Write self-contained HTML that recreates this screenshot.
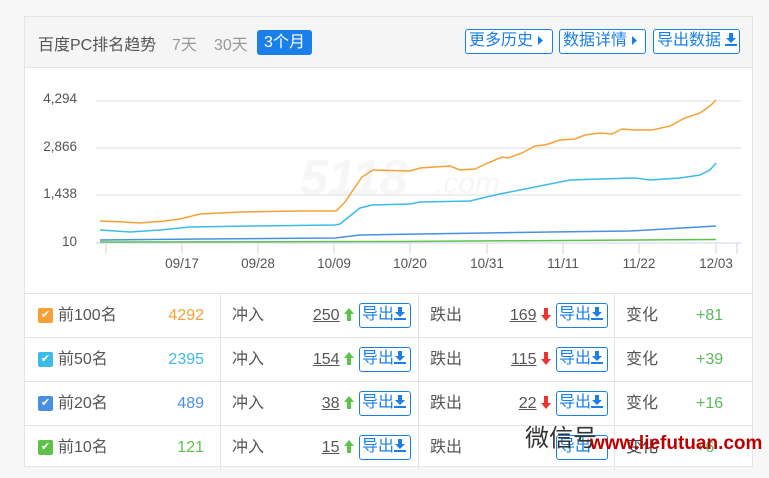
<!DOCTYPE html><html><head><meta charset="utf-8"><style>
*{margin:0;padding:0;box-sizing:border-box}
body{width:769px;height:478px;background:#f7f7f7;font-family:"Liberation Sans","Noto Sans CJK SC",sans-serif;position:relative;overflow:hidden;color:#555}
.card{position:absolute;left:24px;top:16px;width:729px;height:451px;background:#fff;border:1px solid #e4e4e4}
.hd{position:absolute;left:0;top:0;width:727px;height:51px;background:#f5f5f5;border-bottom:1px solid #e4e4e4}
.a{position:absolute;white-space:nowrap}
.btn{position:absolute;border:1px solid #1a7fe8;border-radius:3px;color:#1a7fe8;background:#fff;font-size:16px;line-height:22px;height:25px;padding-left:3px}
.row{position:absolute;left:0;width:727px;height:44px;border-top:1px solid #e4e4e4}
.row .a{top:12px;font-size:16px;line-height:20px}
.cb{position:absolute;left:13px;top:14px;width:15px;height:15px;border-radius:2px;color:#fff;font-size:11px;line-height:15px;text-align:center}
.num{text-decoration:underline;color:#555}
.sb{top:9px!important;height:25px;width:52px;border:1px solid #1a7fe8;border-radius:3px;color:#1a7fe8;font-size:16px!important;line-height:22px!important;padding-left:2px}
.vl{position:absolute;top:0;width:1px;height:44px;background:#e4e4e4}
svg.i{vertical-align:-1px}
</style></head><body>
<div class="card">
<div class="hd">
<div class="a" style="left:13px;top:14px;font-size:16px;color:#555">百度PC排名趋势</div>
<div class="a" style="left:147px;top:14px;font-size:16px;color:#999">7天</div>
<div class="a" style="left:189px;top:14px;font-size:16px;color:#999">30天</div>
<div class="a" style="left:232px;top:13px;width:55px;height:25px;background:#1a7fe8;color:#fff;border-radius:3px;font-size:16px;line-height:25px;text-align:center">3个月</div>
<div class="btn" style="left:440px;top:12px;width:88px">更多历史 <svg class="i" width="7" height="11"><path d="M1 1L6 5.5L1 10Z" fill="#1a7fe8"/></svg></div>
<div class="btn" style="left:534px;top:12px;width:87px">数据详情 <svg class="i" width="7" height="11"><path d="M1 1L6 5.5L1 10Z" fill="#1a7fe8"/></svg></div>
<div class="btn" style="left:628px;top:12px;width:87px">导出数据 <svg class="i" width="12" height="13"><path d="M4 0H8V5H11L6 10L1 5H4Z M0 11H12V13H0Z" fill="#1a7fe8"/></svg></div>
</div>
</div>
<svg class="a" style="left:0;top:0" width="769" height="290" font-family="Liberation Sans,DejaVu Sans,sans-serif">
<text x="300" y="195" font-size="50" font-style="italic" font-weight="bold" fill="#f6f6f6">5118</text><text x="435" y="193" font-size="30" font-style="italic" fill="#f6f6f6">.com</text>
<g stroke="#ddd" stroke-width="1"><line x1="96" y1="101" x2="741" y2="101"/><line x1="96" y1="148" x2="741" y2="148"/><line x1="96" y1="195" x2="741" y2="195"/></g>
<line x1="96" y1="243" x2="741" y2="243" stroke="#ccd6eb"/>
<g stroke="#ccd6eb"><line x1="106" y1="243" x2="106" y2="254"/><line x1="182" y1="243" x2="182" y2="254"/><line x1="258" y1="243" x2="258" y2="254"/><line x1="334" y1="243" x2="334" y2="254"/><line x1="410" y1="243" x2="410" y2="254"/><line x1="487" y1="243" x2="487" y2="254"/><line x1="563" y1="243" x2="563" y2="254"/><line x1="639" y1="243" x2="639" y2="254"/><line x1="716" y1="243" x2="716" y2="254"/><line x1="737" y1="243" x2="737" y2="254"/></g>
<g fill="#555" font-size="13.5" text-anchor="end"><text x="77" y="103">4,294</text><text x="77" y="151">2,866</text><text x="77" y="198">1,438</text><text x="77" y="246">10</text></g>
<g fill="#555" font-size="13.5" text-anchor="middle"><text x="182" y="268">09/17</text><text x="258" y="268">09/28</text><text x="334" y="268">10/09</text><text x="410" y="268">10/20</text><text x="487" y="268">10/31</text><text x="563" y="268">11/11</text><text x="639" y="268">11/22</text><text x="716" y="268">12/03</text></g>
<polyline fill="none" stroke="#f7a035" stroke-width="1.5" points="100,221 125,222 140,223 165,221 180,219 200,214 240,212 300,211 336,211 345,202 362,177 373,170 410,171 420,168 450,166 460,170 475,169 490,162 502,157 508,158 522,153 535,146 545,145 560,140 575,139 585,135 600,133 612,134 622,129 635,130 652,130 670,126 685,118 700,113 710,106 716,100"/>
<polyline fill="none" stroke="#3dbbe8" stroke-width="1.5" points="100,230 130,232 160,230 190,227 250,226 335,225 340,224 360,208 372,205 410,204 420,202 470,201 495,195 520,190 555,183 570,180 600,179 635,178 650,180 680,178 700,175 710,170 716,163"/>
<polyline fill="none" stroke="#4a90e2" stroke-width="1.5" points="100,240 200,239 335,238 360,235 420,234 550,232 630,231 716,226"/>
<polyline fill="none" stroke="#5cc24a" stroke-width="1.5" points="100,242 400,241.5 716,239.5"/>
</svg>
<div class="a" style="left:25px;top:293px;width:727px;height:173px">
<div class="row" style="top:0"><div class="cb" style="background:#f7a035">✔</div><div class="a" style="left:33px">前100名</div><div class="a" style="right:548px;color:#f7a035">4292</div><div class="vl" style="left:195px"></div><div class="a" style="left:207px">冲入</div><div class="a" style="right:398px"><span class="num">250</span> <svg class="i" width="10" height="13"><path d="M5 0L10 6H7V13H3V6H0Z" fill="#5cc24a"/></svg></div><div class="a sb" style="left:334px">导出<svg class="i" width="12" height="13"><path d="M4 0H8V5H11L6 10L1 5H4Z M0 11H12V13H0Z" fill="#1a7fe8"/></svg></div><div class="vl" style="left:393px"></div><div class="a" style="left:405px">跌出</div><div class="a" style="right:201px"><span class="num">169</span> <svg class="i" width="10" height="13"><path d="M3 0H7V7H10L5 13L0 7H3Z" fill="#e33"/></svg></div><div class="a sb" style="left:531px">导出<svg class="i" width="12" height="13"><path d="M4 0H8V5H11L6 10L1 5H4Z M0 11H12V13H0Z" fill="#1a7fe8"/></svg></div><div class="vl" style="left:589px"></div><div class="a" style="left:601px">变化</div><div class="a" style="left:671px;color:#5cb85c">+81</div></div>
<div class="row" style="top:44px"><div class="cb" style="background:#3dbbe8">✔</div><div class="a" style="left:33px">前50名</div><div class="a" style="right:548px;color:#3dbbe8">2395</div><div class="vl" style="left:195px"></div><div class="a" style="left:207px">冲入</div><div class="a" style="right:398px"><span class="num">154</span> <svg class="i" width="10" height="13"><path d="M5 0L10 6H7V13H3V6H0Z" fill="#5cc24a"/></svg></div><div class="a sb" style="left:334px">导出<svg class="i" width="12" height="13"><path d="M4 0H8V5H11L6 10L1 5H4Z M0 11H12V13H0Z" fill="#1a7fe8"/></svg></div><div class="vl" style="left:393px"></div><div class="a" style="left:405px">跌出</div><div class="a" style="right:201px"><span class="num">115</span> <svg class="i" width="10" height="13"><path d="M3 0H7V7H10L5 13L0 7H3Z" fill="#e33"/></svg></div><div class="a sb" style="left:531px">导出<svg class="i" width="12" height="13"><path d="M4 0H8V5H11L6 10L1 5H4Z M0 11H12V13H0Z" fill="#1a7fe8"/></svg></div><div class="vl" style="left:589px"></div><div class="a" style="left:601px">变化</div><div class="a" style="left:671px;color:#5cb85c">+39</div></div>
<div class="row" style="top:88px"><div class="cb" style="background:#4a90e2">✔</div><div class="a" style="left:33px">前20名</div><div class="a" style="right:548px;color:#4a90e2">489</div><div class="vl" style="left:195px"></div><div class="a" style="left:207px">冲入</div><div class="a" style="right:398px"><span class="num">38</span> <svg class="i" width="10" height="13"><path d="M5 0L10 6H7V13H3V6H0Z" fill="#5cc24a"/></svg></div><div class="a sb" style="left:334px">导出<svg class="i" width="12" height="13"><path d="M4 0H8V5H11L6 10L1 5H4Z M0 11H12V13H0Z" fill="#1a7fe8"/></svg></div><div class="vl" style="left:393px"></div><div class="a" style="left:405px">跌出</div><div class="a" style="right:201px"><span class="num">22</span> <svg class="i" width="10" height="13"><path d="M3 0H7V7H10L5 13L0 7H3Z" fill="#e33"/></svg></div><div class="a sb" style="left:531px">导出<svg class="i" width="12" height="13"><path d="M4 0H8V5H11L6 10L1 5H4Z M0 11H12V13H0Z" fill="#1a7fe8"/></svg></div><div class="vl" style="left:589px"></div><div class="a" style="left:601px">变化</div><div class="a" style="left:671px;color:#5cb85c">+16</div></div>
<div class="row" style="top:132px;height:41px"><div class="cb" style="background:#5cc24a">✔</div><div class="a" style="left:33px">前10名</div><div class="a" style="right:548px;color:#5cc24a">121</div><div class="vl" style="left:195px"></div><div class="a" style="left:207px">冲入</div><div class="a" style="right:398px"><span class="num">15</span> <svg class="i" width="10" height="13"><path d="M5 0L10 6H7V13H3V6H0Z" fill="#5cc24a"/></svg></div><div class="a sb" style="left:334px">导出<svg class="i" width="12" height="13"><path d="M4 0H8V5H11L6 10L1 5H4Z M0 11H12V13H0Z" fill="#1a7fe8"/></svg></div><div class="vl" style="left:393px"></div><div class="a" style="left:405px">跌出</div><div class="a sb" style="left:531px">导出</div><div class="vl" style="left:589px"></div><div class="a" style="left:601px;color:#444">变化</div><div class="a" style="left:671px;color:#5cb85c">+6</div>
<div class="a" style="left:500px;top:3px!important;font-size:24px;color:#333">微信号</div><div class="a" style="left:565px;top:8px!important;font-size:19px;color:#b00;font-weight:bold">www.liefutuan.com</div></div>
</div>
</body></html>
